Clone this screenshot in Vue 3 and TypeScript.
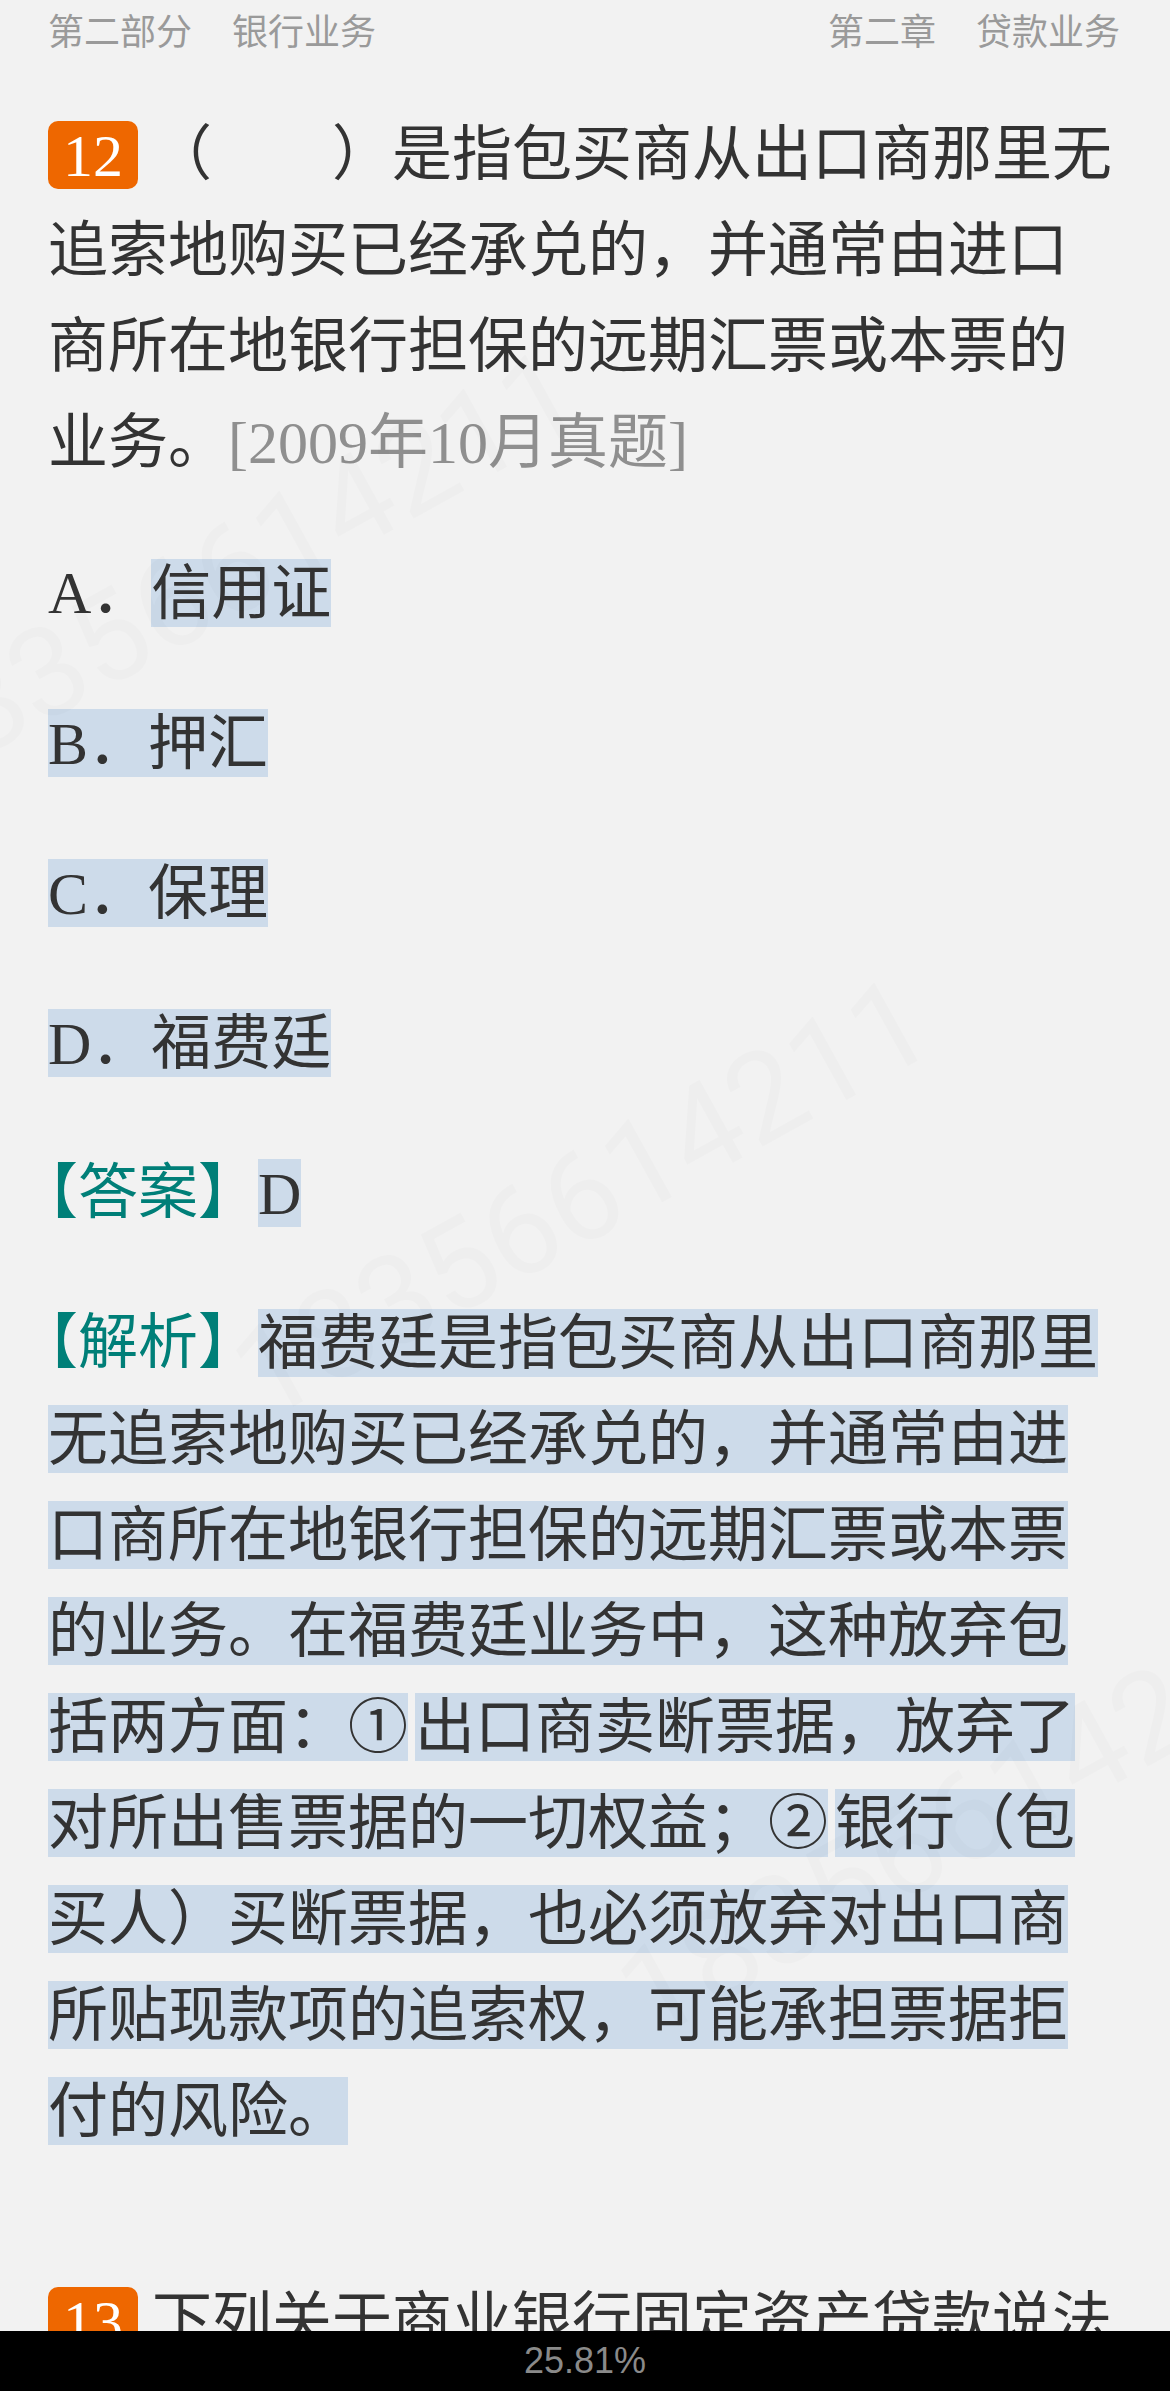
<script setup lang="ts">
const options: { key: string; text: string; wholeRow: boolean }[] = [
  { key: 'A', text: '信用证', wholeRow: false },
  { key: 'B', text: '押汇', wholeRow: true },
  { key: 'C', text: '保理', wholeRow: true },
  { key: 'D', text: '福费廷', wholeRow: true },
]
const marks: { cls: string }[] = [{ cls: 'wm-a' }, { cls: 'wm-b' }, { cls: 'wm-c' }]
</script>

<template>
  <div class="screen">
    <div class="reader">
      <header class="running-head">
        <div class="crumb"><span>第二部分</span><span>银行业务</span></div>
        <div class="crumb"><span>第二章</span><span>贷款业务</span></div>
      </header>

      <article class="content">
        <p class="para"><span class="badge">12</span>（　　）是指包买商从出口商那里无追索地购买已经承兑的，并通常由进口商所在地银行担保的远期汇票或本票的业务。<span class="source">[2009年10月真题]</span></p>

        <p v-for="o in options" :key="o.key" class="para">
          <template v-if="o.wholeRow"><span class="hl">{{ o.key }}．{{ o.text }}</span></template>
          <template v-else>{{ o.key }}．<span class="hl">{{ o.text }}</span></template>
        </p>

        <p class="para"><span class="label">【答案】</span><span class="hl">D</span></p>

        <p class="para"><span class="label">【解析】</span><span class="hl">福费廷是指包买商从出口商那里无追索地购买已经承兑的，并通常由进口商所在地银行担保的远期汇票或本票的业务。在福费廷业务中，这种放弃包括两方面：①</span><span class="num-gap"></span><span class="hl">出口商卖断票据，放弃了对所出售票据的一切权益；②</span><span class="num-gap"></span><span class="hl">银行（包买人）买断票据，也必须放弃对出口商所贴现款项的追索权，可能承担票据拒付的风险。</span></p>

        <p class="para next"><span class="badge">13</span>下列关于商业银行固定资产贷款说法</p>
      </article>

      <span v-for="m in marks" :key="m.cls" class="watermark" :class="m.cls">18356614211</span>
    </div>

    <footer class="progress">25.81%</footer>
  </div>
</template>

<style>
html, body { margin: 0; padding: 0; background: #f2f2f2; }
</style>

<style scoped>
.screen {
  width: 1170px;
  height: 2391px;
  display: flex;
  flex-direction: column;
  background: #f2f2f2;
  overflow: hidden;
}
.reader {
  position: relative;
  flex: 1;
  min-height: 0;
  overflow: hidden;
}
.running-head {
  height: 60px;
  box-sizing: border-box;
  padding: 0 50px 3px 48px;
  display: flex;
  justify-content: space-between;
  align-items: center;
  font-family: "Noto Sans CJK SC", sans-serif;
  font-size: 36px;
  color: #9a9a9a;
}
.crumb {
  display: flex;
  gap: 40px;
}
.content {
  padding: 47px 48px 0;
  font-family: "Liberation Serif", "Noto Sans CJK SC", serif;
  font-size: 60px;
  line-height: 96px;
  color: #333;
  line-break: strict;
}
.para {
  margin: 0 0 54px;
}
.next {
  margin-top: 114px;
}
.badge {
  display: inline;
  padding: 1.5px 15px 1px;
  margin-right: 14px;
  background: #ee6700;
  color: #fff;
  border-radius: 10px;
}
.source {
  color: #8f8f8f;
}
.label {
  margin-left: -30px;
  color: #007f78;
}
.hl {
  padding: 1.5px 0 1px;
  background: #cddbea;
  -webkit-box-decoration-break: clone;
  box-decoration-break: clone;
}
.num-gap {
  display: inline-block;
  width: 7px;
}
.watermark {
  position: absolute;
  transform-origin: 0 50%;
  transform: rotate(-29deg);
  font-family: Roboto, sans-serif;
  font-weight: 400;
  font-size: 125px;
  line-height: 200px;
  white-space: nowrap;
  color: rgba(0, 0, 0, 0.016);
  pointer-events: none;
}
.wm-a { left: -105px; top: 658px; }
.wm-b { left: 244px; top: 1286px; }
.wm-c { left: 629px; top: 1906px; }
.progress {
  flex: none;
  height: 60px;
  background: #000;
  color: #8a8a8a;
  font-family: "Liberation Sans", sans-serif;
  font-size: 36px;
  line-height: 60px;
  text-align: center;
}
</style>
